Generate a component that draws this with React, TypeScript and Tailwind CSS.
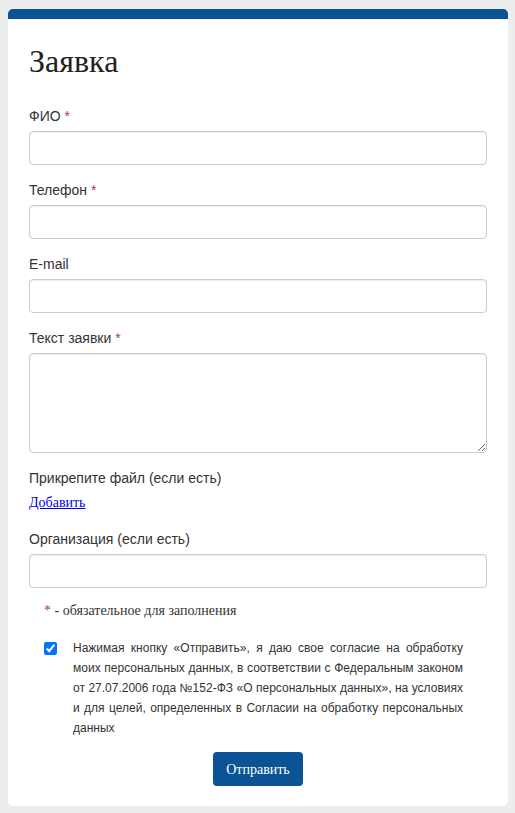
const sans = "font-['Arial','Liberation_Sans',sans-serif]";
const serif = "font-['Times_New_Roman','Liberation_Serif',serif]";

function Field({
  label,
  required,
  tall,
}: {
  label: string;
  required?: boolean;
  tall?: boolean;
}) {
  return (
    <div className="mb-[15px]">
      <label className={`mb-[5px] block text-[14px] leading-5 text-[#333] ${sans}`}>
        {label}
        {required && <span className="text-[#a94442]"> *</span>}
      </label>
      {tall ? (
        <textarea className="block h-[100px] w-full rounded-[4px] border border-[#ccc] bg-white px-3 py-1.5 shadow-[inset_0_1px_1px_rgba(0,0,0,0.075)] outline-none" />
      ) : (
        <input
          type="text"
          className="block h-[34px] w-full rounded-[4px] border border-[#ccc] bg-white px-3 shadow-[inset_0_1px_1px_rgba(0,0,0,0.075)] outline-none"
        />
      )}
    </div>
  );
}

export default function App() {
  return (
    <div className="min-h-[813px] bg-[#ededed] px-2 pt-[9px] pb-2">
      <div className="w-[500px] rounded-[5px] border-t-[10px] border-[#0b5394] bg-white px-[21px] pt-[25px] pb-[20px]">
        <h1 className={`mb-[27px] text-[32px] leading-[1.1] text-[#222] ${serif}`}>Заявка</h1>

        <Field label="ФИО" required />
        <Field label="Телефон" required />
        <Field label="E-mail" />
        <Field label="Текст заявки" required tall />

        <div className="mb-[16px]">
          <div className={`mb-[5px] text-[14px] leading-5 text-[#333] ${sans}`}>
            Прикрепите файл (если есть)
          </div>
          <a
            href="#"
            className={`block w-fit text-[14px] leading-5 text-[#0000ee] underline ${serif}`}
          >
            Добавить
          </a>
        </div>

        <Field label="Организация (если есть)" />

        <p className={`-mt-[2px] pl-[15px] text-[14px] leading-5 text-[#333] ${serif}`}>
          <span className="text-[#a94442]">*</span> - обязательное для заполнения
        </p>

        <label className="mt-[17px] flex gap-4 pl-[15px] pr-[24px]">
          <input
            type="checkbox"
            defaultChecked
            className="mt-[4px] size-[13px] shrink-0 accent-[#0075ff]"
          />
          <span className={`text-justify text-[12px] leading-5 text-[#333] ${sans}`}>
            Нажимая кнопку «Отправить», я даю свое согласие на обработку моих персональных
            данных, в соответствии с Федеральным законом от 27.07.2006 года №152-ФЗ «О
            персональных данных», на условиях и для целей, определенных в Согласии на
            обработку персональных данных
          </span>
        </label>

        <div className="mt-[14px] flex justify-center">
          <button
            type="button"
            className={`h-[34px] rounded-[4px] bg-[#0b5394] px-[13px] text-[14px] text-white ${serif}`}
          >
            Отправить
          </button>
        </div>
      </div>
    </div>
  );
}
